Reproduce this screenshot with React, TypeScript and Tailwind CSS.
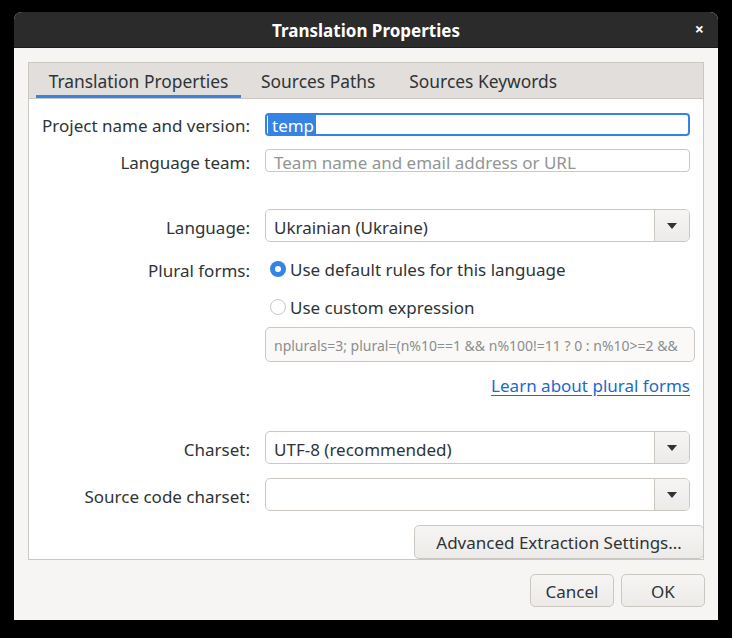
import React from 'react';

const font = { fontFamily: '"Noto Sans", "DejaVu Sans", sans-serif' };

const Arrow = () => (
  <svg width="12" height="8" viewBox="0 0 12 8">
    <path d="M1 1 L11 1 L6 7 Z" fill="#2e3436" />
  </svg>
);

const Combo = ({ value }: { value: string }) => (
  <div className="flex h-[33px] w-[425px] rounded-[5px] border border-[#cdc7c2] bg-white overflow-hidden">
    <div className="flex-1 flex items-center px-[8px] text-[#2e3436]">
      <span className="translate-y-[2px]">{value}</span>
    </div>
    <div className="w-[35px] flex items-center justify-center border-l border-[#cdc7c2] bg-gradient-to-b from-[#f6f5f4] to-[#edebe9]">
      <Arrow />
    </div>
  </div>
);

const Label = ({ children }: { children: React.ReactNode }) => (
  <div className="w-[221px] text-right text-[#2e3436] shrink-0 translate-y-[2px]">{children}</div>
);

const Radio = ({ checked }: { checked?: boolean }) =>
  checked ? (
    <span className="w-[16px] h-[16px] rounded-full bg-[#3584e4] flex items-center justify-center">
      <span className="w-[6px] h-[6px] rounded-full bg-white" />
    </span>
  ) : (
    <span className="w-[16px] h-[16px] rounded-full bg-white border border-[#cdc7c2]" />
  );

const Button = ({ children, className }: { children: React.ReactNode; className: string }) => (
  <div
    className={`${className} rounded-[5px] border border-[#cdc7c2] bg-gradient-to-b from-[#f6f5f4] to-[#edebe9] flex items-center justify-center text-[#2e3436]`}
  >
    <span className="translate-y-[1px]">{children}</span>
  </div>
);

export default function App() {
  return (
    <div className="w-[732px] h-[638px] bg-black pt-[12px] px-[14px]" style={font}>
      <div className="w-[704px] h-[608px] rounded-t-[8px] overflow-hidden flex flex-col bg-[#f6f5f4]">
        {/* header bar */}
        <div className="h-[36px] bg-[#2b2b2b] flex items-center justify-center relative border-b border-[#1b1b1b]">
          <span className="text-white font-bold text-[17px] translate-y-[1px]">Translation Properties</span>
          <span className="absolute right-[14px] top-[9px] text-white text-[16px] font-bold leading-none">×</span>
        </div>

        <div className="flex-1 flex flex-col px-[14px] pt-[14px]">
          {/* notebook */}
          <div className="h-[498px] border border-[#cdc7c2] flex flex-col bg-white">
            <div className="h-[37px] bg-[#e1dedb] border-b border-[#cdc7c2] flex pl-[7px] text-[17.4px] text-[#2e3436]">
              <div className="w-[205px] flex items-center justify-center border-b-[3px] border-[#3584e4] pt-[5px]">Translation Properties</div>
              <div className="pl-[20px] pr-[34px] flex items-center pt-[2px]">Sources Paths</div>
              <div className="flex items-center pt-[2px]">Sources Keywords</div>
            </div>

            <div className="flex-1 flex flex-col text-[17px]">
              <div className="flex items-center gap-[15px] mt-[14px] h-[22px]">
                <Label>Project name and version:</Label>
                <div className="w-[425px] h-[23px] rounded-[4px] border-2 border-[#3584e4] flex items-center pl-[1px]">
                  <span className="bg-[#3584e4] text-white leading-[19px] pl-[4px] pr-[2px] pt-[2px]">temp</span>
                </div>
              </div>
              <div className="flex items-center gap-[15px] mt-[14px] h-[23px]">
                <Label>Language team:</Label>
                <div className="w-[425px] h-[23px] rounded-[4px] border border-[#cdc7c2] flex items-center px-[8px] text-[#929595]">
                  <span className="translate-y-[2px]">Team name and email address or URL</span>
                </div>
              </div>
              <div className="flex items-center gap-[15px] mt-[37px]">
                <Label>Language:</Label>
                <Combo value="Ukrainian (Ukraine)" />
              </div>
              <div className="flex items-center gap-[15px] mt-[14px] h-[26px]">
                <Label>Plural forms:</Label>
                <div className="flex items-center gap-[4px] pl-[5px] text-[#2e3436]">
                  <Radio checked />
                  <span className="translate-y-[1px]">Use default rules for this language</span>
                </div>
              </div>
              <div className="flex items-center gap-[15px] mt-[12px] h-[26px]">
                <Label>{''}</Label>
                <div className="flex items-center gap-[4px] pl-[5px] text-[#2e3436]">
                  <Radio />
                  <span className="translate-y-[1px]">Use custom expression</span>
                </div>
              </div>
              <div className="flex items-center gap-[15px] mt-[7px]">
                <Label>{''}</Label>
                <div className="w-[430px] h-[35px] rounded-[5px] border border-[#cdc7c2] bg-[#faf9f8] flex items-center pl-[8px] text-[14px] text-[#8b8e8f] overflow-hidden whitespace-nowrap">
                  <span className="translate-y-[1px]">nplurals=3; plural=(n%10==1 &amp;&amp; n%100!=11 ? 0 : n%10&gt;=2 &amp;&amp;</span>
                </div>
              </div>
              <div className="flex justify-end mt-[10px] h-[24px] pr-[13px]">
                <span className="text-[#1b6acb] underline underline-offset-[3px] translate-y-[1px]">Learn about plural forms</span>
              </div>
              <div className="flex items-center gap-[15px] mt-[35px]">
                <Label>Charset:</Label>
                <Combo value="UTF-8 (recommended)" />
              </div>
              <div className="flex items-center gap-[15px] mt-[14px]">
                <Label>Source code charset:</Label>
                <Combo value="" />
              </div>
              <div className="flex justify-end mt-[14px]">
                <Button className="w-[290px] h-[34px] mr-[-1px]">Advanced Extraction Settings…</Button>
              </div>
            </div>
          </div>

          <div className="flex justify-end gap-[7px] mt-[14px] text-[17px]">
            <Button className="w-[84px] h-[33px]">Cancel</Button>
            <Button className="w-[84px] h-[33px] mr-[-1px]">OK</Button>
          </div>
        </div>
      </div>
    </div>
  );
}
